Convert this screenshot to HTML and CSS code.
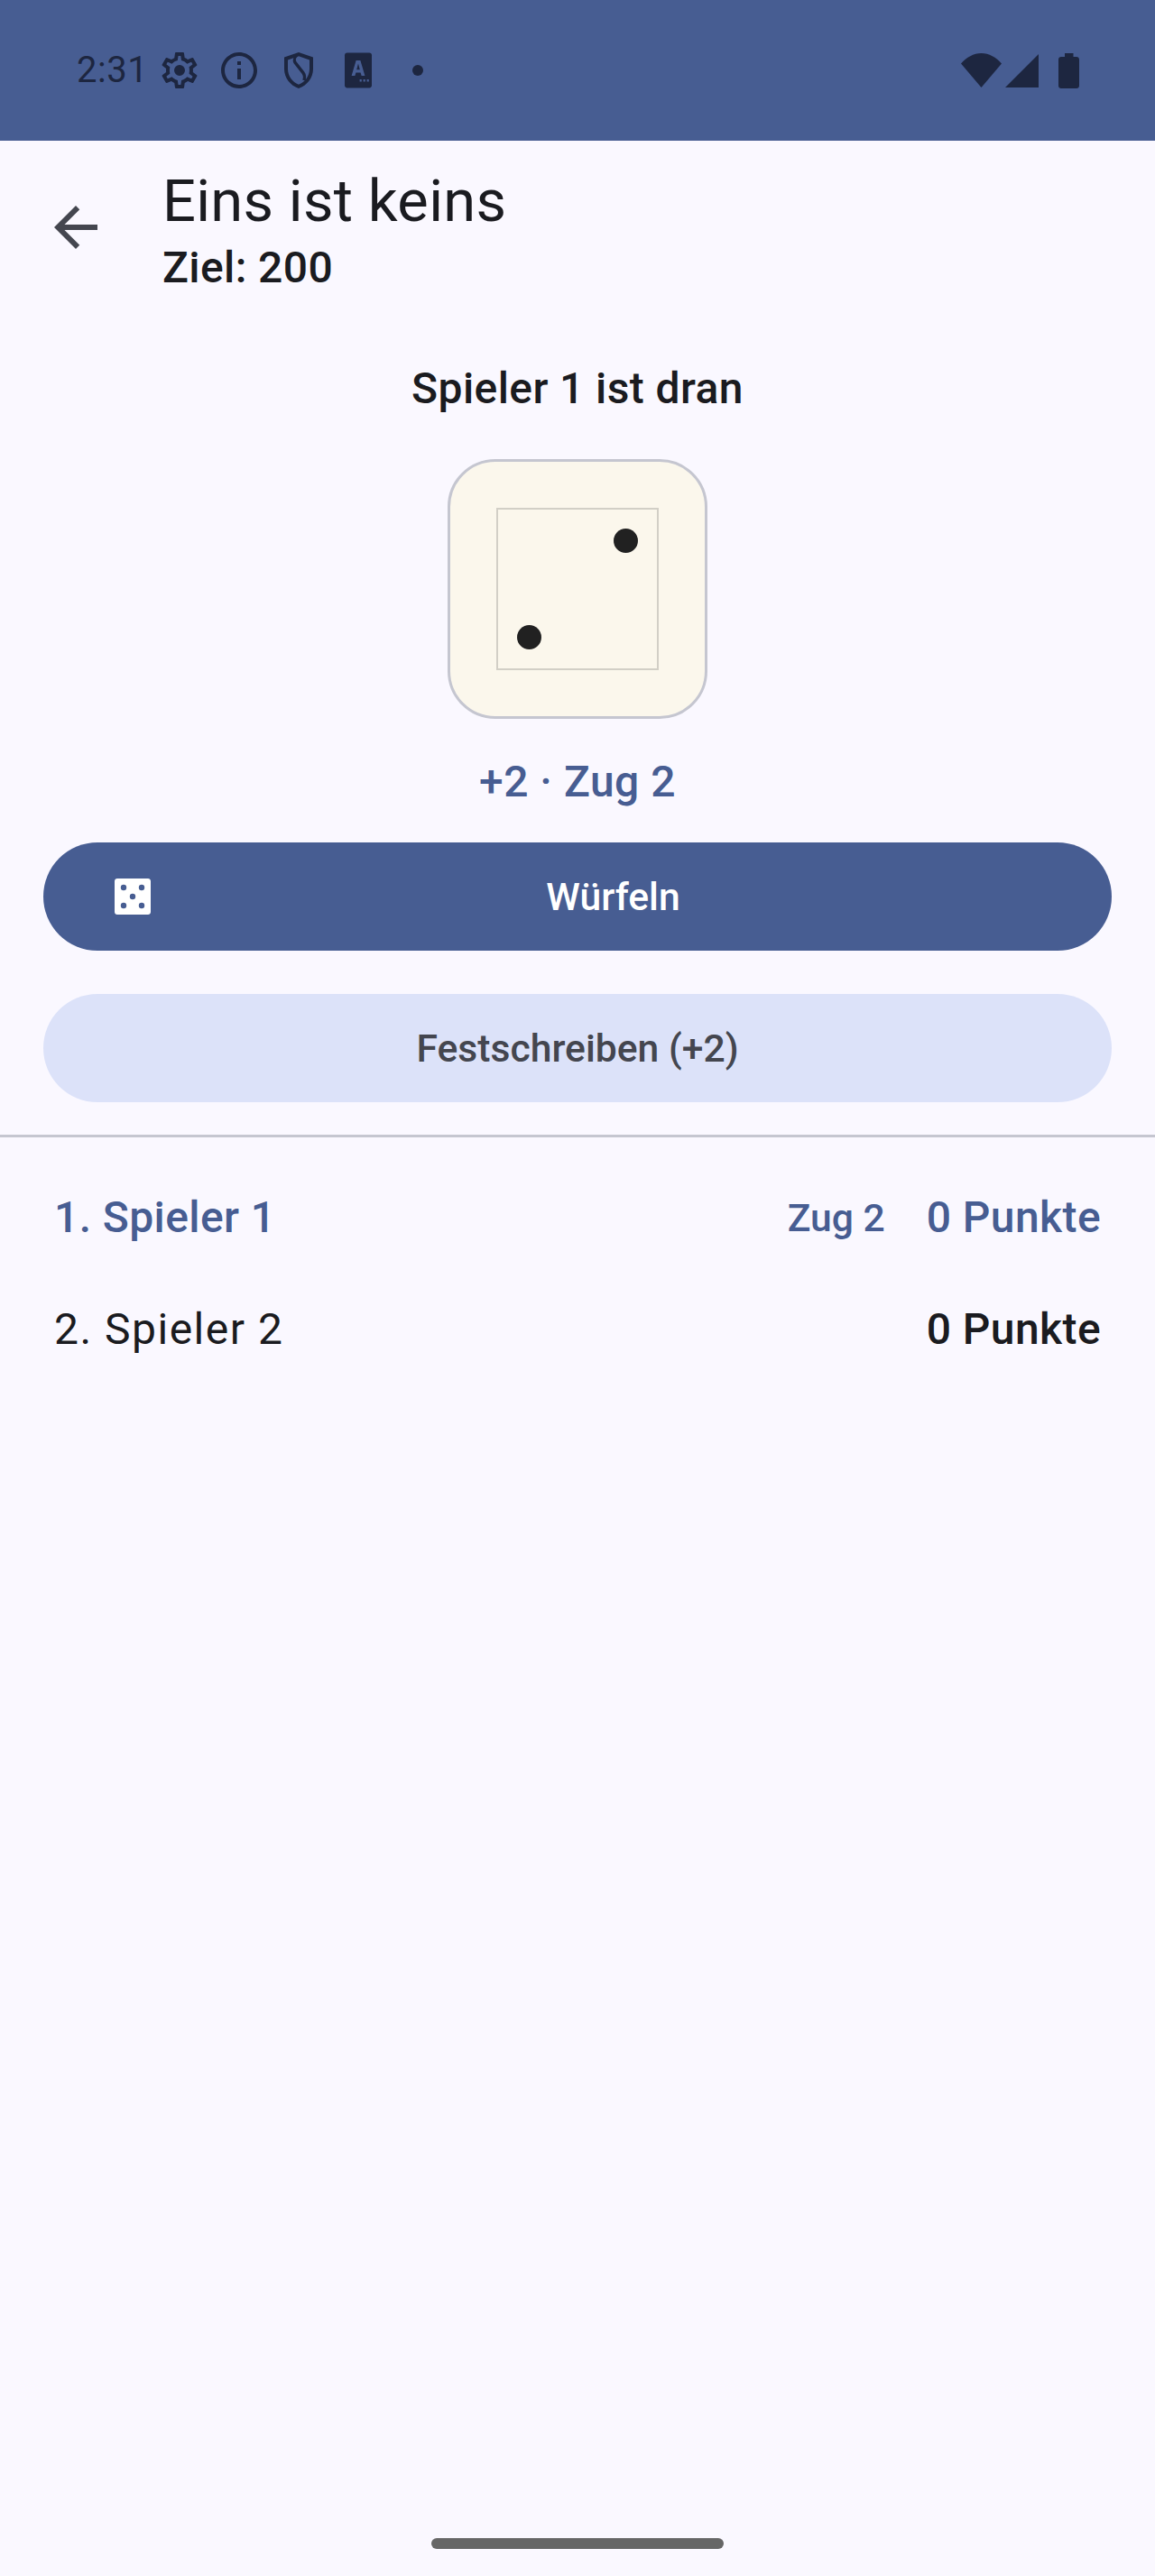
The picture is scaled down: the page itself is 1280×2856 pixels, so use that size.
FILE: index.html
```html
<!DOCTYPE html>
<html lang="de">
<head>
<meta charset="utf-8">
<title>Eins ist keins</title>
<link rel="stylesheet" href="styles.css">
</head>
<body>
<div class="screen">
  <header class="status">
    <div class="status-left">
      <span class="clock">2:31</span>
      <svg class="si gear" viewBox="0 0 24 24"><path fill-rule="evenodd" d="M19.4 13c.04-.33.06-.66.06-1s-.02-.67-.06-1l2.1-1.65c.2-.15.25-.42.12-.64l-2-3.46c-.12-.22-.39-.3-.61-.22l-2.49 1c-.52-.4-1.08-.73-1.69-.98l-.38-2.65A.488.488 0 0 0 14 2h-4c-.25 0-.46.18-.49.42l-.38 2.65c-.61.25-1.17.59-1.69.98l-2.49-1c-.23-.09-.49 0-.61.22l-2 3.46c-.13.22-.07.49.12.64L4.56 11c-.04.33-.07.67-.07 1s.03.67.07 1l-2.1 1.65c-.2.15-.25.42-.12.64l2 3.46c.12.22.39.3.61.22l2.49-1c.52.4 1.08.73 1.69.98l.38 2.65c.03.24.24.42.49.42h4c.25 0 .46-.18.49-.42l.38-2.65c.61-.25 1.17-.59 1.69-.98l2.49 1c.23.09.49 0 .61-.22l2-3.46c.12-.22.07-.49-.12-.64L19.4 13zm-1.98-1.71c.04.31.05.52.05.71s-.02.41-.05.71l-.14 1.13.89.7 1.08.84-.7 1.21-1.27-.51-1.04-.42-.9.68c-.43.32-.84.56-1.25.73l-1.06.43-.16 1.13-.2 1.35h-1.4l-.19-1.35-.16-1.13-1.06-.43c-.43-.18-.83-.41-1.23-.71l-.91-.7-1.06.43-1.27.51-.7-1.21 1.08-.84.89-.7-.14-1.13c-.03-.31-.05-.54-.05-.72s.02-.41.05-.71l.14-1.13-.89-.7-1.08-.84.7-1.21 1.27.51 1.04.42.9-.68c.43-.32.84-.56 1.25-.73l1.06-.43.16-1.13.2-1.35h1.39l.19 1.35.16 1.13 1.06.43c.43.18.83.41 1.23.71l.91.7 1.06-.43 1.27-.51.7 1.21-1.07.85-.89.7.14 1.13zM12 9a3 3 0 1 0 0 6 3 3 0 0 0 0-6z"/></svg>
      <svg class="si" viewBox="0 0 24 24"><path d="M11 7h2v2h-2zm0 4h2v6h-2zm1-9C6.48 2 2 6.48 2 12s4.48 10 10 10 10-4.48 10-10S17.52 2 12 2zm0 18c-4.41 0-8-3.59-8-8s3.59-8 8-8 8 3.59 8 8-3.59 8-8 8z"/></svg>
      <svg class="si" viewBox="0 0 24 24"><path d="M12 2 4 4.8v6.4c0 4.9 3.3 9.1 8 10.8 4.700-1.700 8-5.900 8-10.800V4.800L12 2zm6 9.200c0 3.800-2.400 7.200-6 8.700-3.600-1.500-6-4.900-6-8.700V6.200l3.200-1.100c-.5 1-.5 2.100.2 3.100l4.300 5.500c.8 1 1 2.400.4 3.500l1.600.5c.7-1.600.5-3.500-.6-4.900L10.800 7.300c-.6-.8-.5-2 .3-2.700l.9-.5 6 2.100v5z"/></svg>
      <svg class="si" viewBox="0 0 24 24"><path d="M5.800 2.300h12.400c.7 0 1.300.6 1.300 1.300v16.800c0 .7-.6 1.300-1.300 1.300H5.800c-.7 0-1.300-.6-1.300-1.300V3.600c0-.7.6-1.300 1.300-1.300z"/><path class="si-cut" d="M10.800 6.500h2.400l2.500 8.500h-1.900l-.5-1.800h-2.600l-.5 1.800H8.300zM11.100 11.600h1.800L12 8.300zM12.800 17h1.100v1.200h-1.100zM14.800 17h1.100v1.200h-1.100zM16.800 17h1.100v1.200h-1.100z"/></svg>
      <span class="status-dot"></span>
    </div>
    <div class="status-right">
      <svg class="wifi" viewBox="0 0 45 38"><path d="M0 11.500C6 4.500 14 0 22.500 0S39 4.500 45 11.500L22.500 38z"/></svg>
      <svg class="signal" viewBox="0 0 37 37"><path d="M37 0v37H0z"/></svg>
      <svg class="battery" viewBox="0 0 23 39"><path d="M7 0h9.500v4H20c1.700 0 3 1.300 3 3v29c0 1.700-1.300 3-3 3H3c-1.700 0-3-1.300-3-3V7c0-1.700 1.300-3 3-3h4z"/></svg>
    </div>
  </header>

  <div class="topbar">
    <div class="back">
      <svg viewBox="0 0 24 24"><path d="M20 11H7.830l5.590-5.590L12 4l-8 8 8 8 1.410-1.410L7.830 13H20v-2z"/></svg>
    </div>
    <div class="titles">
      <h1 class="title">Eins ist keins</h1>
      <p class="subtitle">Ziel: 200</p>
    </div>
  </div>

  <main class="game">
    <p class="turn">Spieler 1 ist dran</p>
    <div class="die">
      <svg viewBox="0 0 180 180"><rect class="die-frame" x="1" y="1" width="178" height="178"/><circle class="pip" cx="143.500" cy="36.500" r="13.500"/><circle class="pip" cx="36.500" cy="143.500" r="13.500"/></svg>
    </div>
    <p class="roll">+2 · Zug 2</p>
    <div class="btn btn-primary">
      <svg class="btn-icon" viewBox="0 0 40 40"><path fill-rule="evenodd" d="M3 0h34c1.700 0 3 1.300 3 3v34c0 1.700-1.300 3-3 3H3c-1.700 0-3-1.300-3-3V3c0-1.700 1.300-3 3-3zM10 6.800a3.200 3.200 0 1 0 0 6.400 3.200 3.200 0 0 0 0-6.400zm20 0a3.200 3.200 0 1 0 0 6.400 3.200 3.200 0 0 0 0-6.400zM20 16.800a3.200 3.200 0 1 0 0 6.400 3.200 3.200 0 0 0 0-6.400zM10 26.800a3.200 3.200 0 1 0 0 6.400 3.200 3.200 0 0 0 0-6.400zm20 0a3.200 3.200 0 1 0 0 6.400 3.200 3.200 0 0 0 0-6.400z"/></svg>
      <span class="btn-label">Würfeln</span>
    </div>
    <div class="btn btn-tonal">Festschreiben (+2)</div>
  </main>

  <hr class="divider">

  <section class="scores">
    <div class="row row-active">
      <span class="name">1. Spieler 1</span>
      <span class="turn-count">Zug 2</span>
      <span class="points">0 Punkte</span>
    </div>
    <div class="row">
      <span class="name">2. Spieler 2</span>
      <span class="points">0 Punkte</span>
    </div>
  </section>

  <div class="home-wrap"><div class="home"></div></div>
</div>
</body>
</html>
```

FILE: styles.css
```css
* { box-sizing: border-box; }
html, body { margin: 0; padding: 0; }
body { font-family: Roboto, "Liberation Sans", sans-serif; background: #faf8ff; color: #1a1b20; }
p, h1 { margin: 0; font-weight: 400; }

.screen { width: 1280px; height: 2856px; display: flex; flex-direction: column; }

.status { height: 156px; flex: none; background: #475d92; color: #1d2640; display: flex; align-items: center; justify-content: space-between; padding: 0 84px 0 85px; }
.status-left { display: flex; align-items: center; }
.clock { font-size: 40px; line-height: 48px; width: 90px; letter-spacing: 0.5px; }
.si { width: 48px; height: 48px; fill: #1d2640; margin-right: 18px; flex: none; }
.si-cut { fill: #475d92; }
.status-dot { width: 12px; height: 12px; border-radius: 50%; background: #1d2640; margin-left: 18px; }
.status-right { display: flex; align-items: flex-start; }
.status-right svg { fill: #1d2640; display: block; }
.wifi { width: 45px; height: 38px; }
.signal { width: 37px; height: 37px; margin-left: 4px; margin-top: 1px; }
.battery { width: 23px; height: 39px; margin-left: 22px; }

.topbar { display: flex; height: 190px; flex: none; }
.back { width: 180px; flex: none; padding: 60px 0 0 48px; }
.back svg { width: 72px; height: 72px; fill: #44464f; display: block; }
.titles { padding-top: 31px; }
.title { font-size: 65px; line-height: 72px; letter-spacing: 0.3px; }
.subtitle { font-size: 48px; line-height: 60px; font-weight: 500; letter-spacing: 0.4px; margin-top: 8px; }

.game { display: flex; flex-direction: column; align-items: center; padding: 0 48px; flex: none; }
.turn { font-size: 48px; line-height: 60px; font-weight: 500; letter-spacing: 0.4px; margin-top: 55px; }
.die { width: 288px; height: 288px; border: 3px solid #c5c6d0; border-radius: 53px; background: #fbf7ec; margin-top: 48px; display: flex; align-items: center; justify-content: center; }
.die svg { width: 180px; height: 180px; display: block; }
.die-frame { fill: none; stroke: #d2cfc6; stroke-width: 2; }
.pip { fill: #212121; }
.roll { font-size: 48px; line-height: 60px; font-weight: 500; letter-spacing: 0.5px; color: #475d92; margin-top: 40px; }
.btn { width: 1184px; height: 120px; flex: none; border-radius: 60px; display: flex; align-items: center; font-size: 42.67px; font-weight: 500; }
.btn-primary { background: #475d92; color: #fff; margin-top: 37px; padding: 0 0 0 79px; }
.btn-icon { width: 40px; height: 40px; fill: #fff; flex: none; }
.btn-label { flex: 1; text-align: center; padding-right: 40px; }
.btn-tonal { background: #dce2f9; color: #44464f; justify-content: center; margin-top: 48px; }

.divider { border: 0; height: 3px; background: #c5c6d0; margin: 36px 0 0; flex: none; width: 100%; }

.scores { flex: 1; padding: 59px 60px 0; display: flex; flex-direction: column; gap: 64px; }
.row { display: flex; align-items: center; font-size: 48px; line-height: 60px; letter-spacing: 0.4px; }
.name { flex: 1; letter-spacing: 1.5px; }
.points { font-weight: 500; }
.row-active { color: #475d92; }
.row-active .name { font-weight: 500; letter-spacing: 0.4px; }
.turn-count { font-size: 42.67px; font-weight: 500; letter-spacing: 0; margin-right: 46px; }

.home-wrap { flex: none; height: 42px; display: flex; justify-content: center; }
.home { width: 324px; height: 12px; border-radius: 6px; background: #666; }
```
